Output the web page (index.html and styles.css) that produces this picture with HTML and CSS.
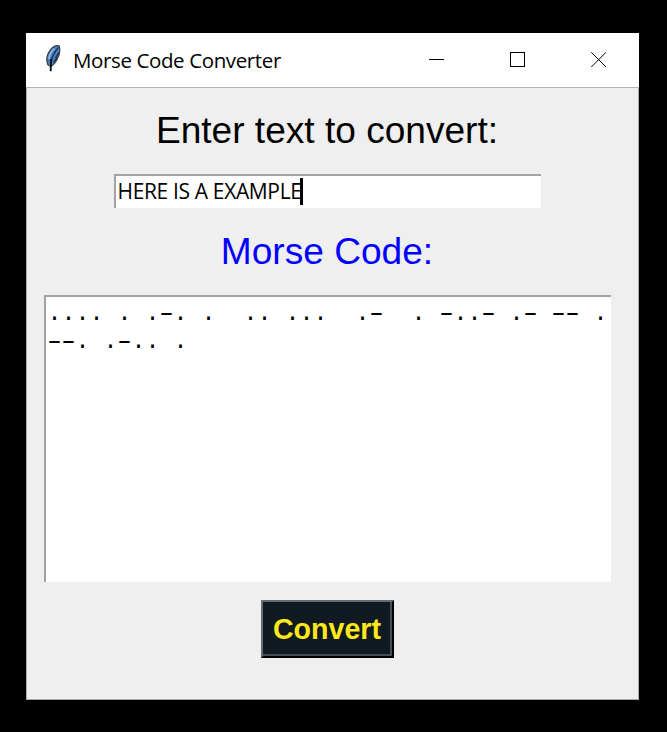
FILE: index.html
```
<!DOCTYPE html>
<html lang="en">
<head>
<meta charset="utf-8">
<title>Morse Code Converter</title>
<link rel="stylesheet" href="styles.css">
</head>
<body>
<main class="window">
  <header class="titlebar">
    <svg class="feather" width="18" height="30" viewBox="0 0 18 30">
      <path d="M3 21C1 16 2 10 6 5Q10 0 15 1Q17 8 13 15Q10 21 6 23Z" fill="#4b7fbd" stroke="#343e49" stroke-width="1.3"/>
      <path d="M4 15Q5 8 10 4" fill="none" stroke="#8db8e3" stroke-width="1.8"/>
      <path d="M14 3Q8 10 6.5 18M15 8L11 14M13 14L9 18" fill="none" stroke="#192b43" stroke-width="1.3"/>
      <path d="M6.500 15L6 28" fill="none" stroke="#111" stroke-width="2"/>
    </svg>
    <span class="title">Morse Code Converter</span>
    <svg class="controls" width="180" height="16" viewBox="0 0 180 16" fill="none" stroke="#000">
      <path d="M0 7.5H15"/>
      <rect x="81.5" y=".5" width="14" height="14"/>
      <path d="M162.300 .3L177 15M177 .3L162.300 15"/>
    </svg>
  </header>
  <section class="client">
    <label class="label">Enter text to convert:</label>
    <div class="entry"><span class="entry-text">HERE IS A EXAMPLE</span><i class="caret"></i></div>
    <div class="label label-output">Morse Code:</div>
    <pre class="output">.... . .<i>-</i>. .  .. ...  .<i>-</i>  . <i>-</i>..<i>-</i> .<i>-</i> <i>--</i> .
<i>--</i>. .<i>-</i>.. .</pre>
    <button class="convert">Convert</button>
  </section>
</main>
</body>
</html>
```
FILE: styles.css
```
* { box-sizing: border-box; }
body {
  margin: 0;
  padding: 33px 0 0 26px;
  height: 732px;
  overflow: hidden;
  background: #000;
  color: #000;
  font-family: "Liberation Sans", sans-serif;
}
.window {
  width: 613px;
  height: 667px;
  background: #efefef;
  border: 1px solid #aaa;
  border-top: 0;
}
.titlebar {
  display: flex;
  align-items: center;
  height: 55px;
  margin: 0 -1px;
  padding: 0 30px 0 19px;
  background: #fff;
  border-bottom: 1px solid #b3b3b3;
}
.feather { flex: none; width: 17px; margin: 0 11px 2px 0; }
.title {
  font: 20.5px/28px "Open Sans", sans-serif;
  letter-spacing: -.38px;
  white-space: nowrap;
}
.controls { flex: none; margin-left: auto; }
.client {
  display: flex;
  flex-direction: column;
  align-items: center;
  margin-right: 11px;
}
.label {
  margin: 20px 0 0;
  font-size: 37.1px;
  line-height: 44px;
}
.entry {
  display: flex;
  align-items: center;
  width: 427px;
  height: 34px;
  margin-top: 22px;
  padding: 0 0 2px 2px;
  background: #fff;
  border-top: 2px solid #a3a3a3;
  border-left: 2px solid #a3a3a3;
}
.entry-text {
  font: 21px/28px "Open Sans", sans-serif;
  letter-spacing: -.35px;
  white-space: nowrap;
}
.caret { width: 3px; height: 27px; margin-left: -2px; background: #000; }
.label-output { margin-top: 21px; color: #00f; }
.output {
  width: 567px;
  height: 287px;
  margin: 22px 0 0;
  padding: 3px 0 0 2px;
  background: #fff;
  border-top: 2px solid #a3a3a3;
  border-left: 2px solid #a3a3a3;
  font: 23.33px/28px "Liberation Mono", monospace;
}
.output i {
  font-style: normal;
  text-shadow: 2px 0 #000, -2px 0 #000;
}
.convert {
  width: 133px;
  height: 58px;
  margin: 18px 0 0;
  padding: 0;
  background: #101a20;
  border: 2px solid;
  border-color: #646d73 #000 #000 #646d73;
  box-shadow: inset -2px -2px #434d53;
  color: #ffe81a;
  font: bold 28.6px/34px "Liberation Sans", sans-serif;
}
```
